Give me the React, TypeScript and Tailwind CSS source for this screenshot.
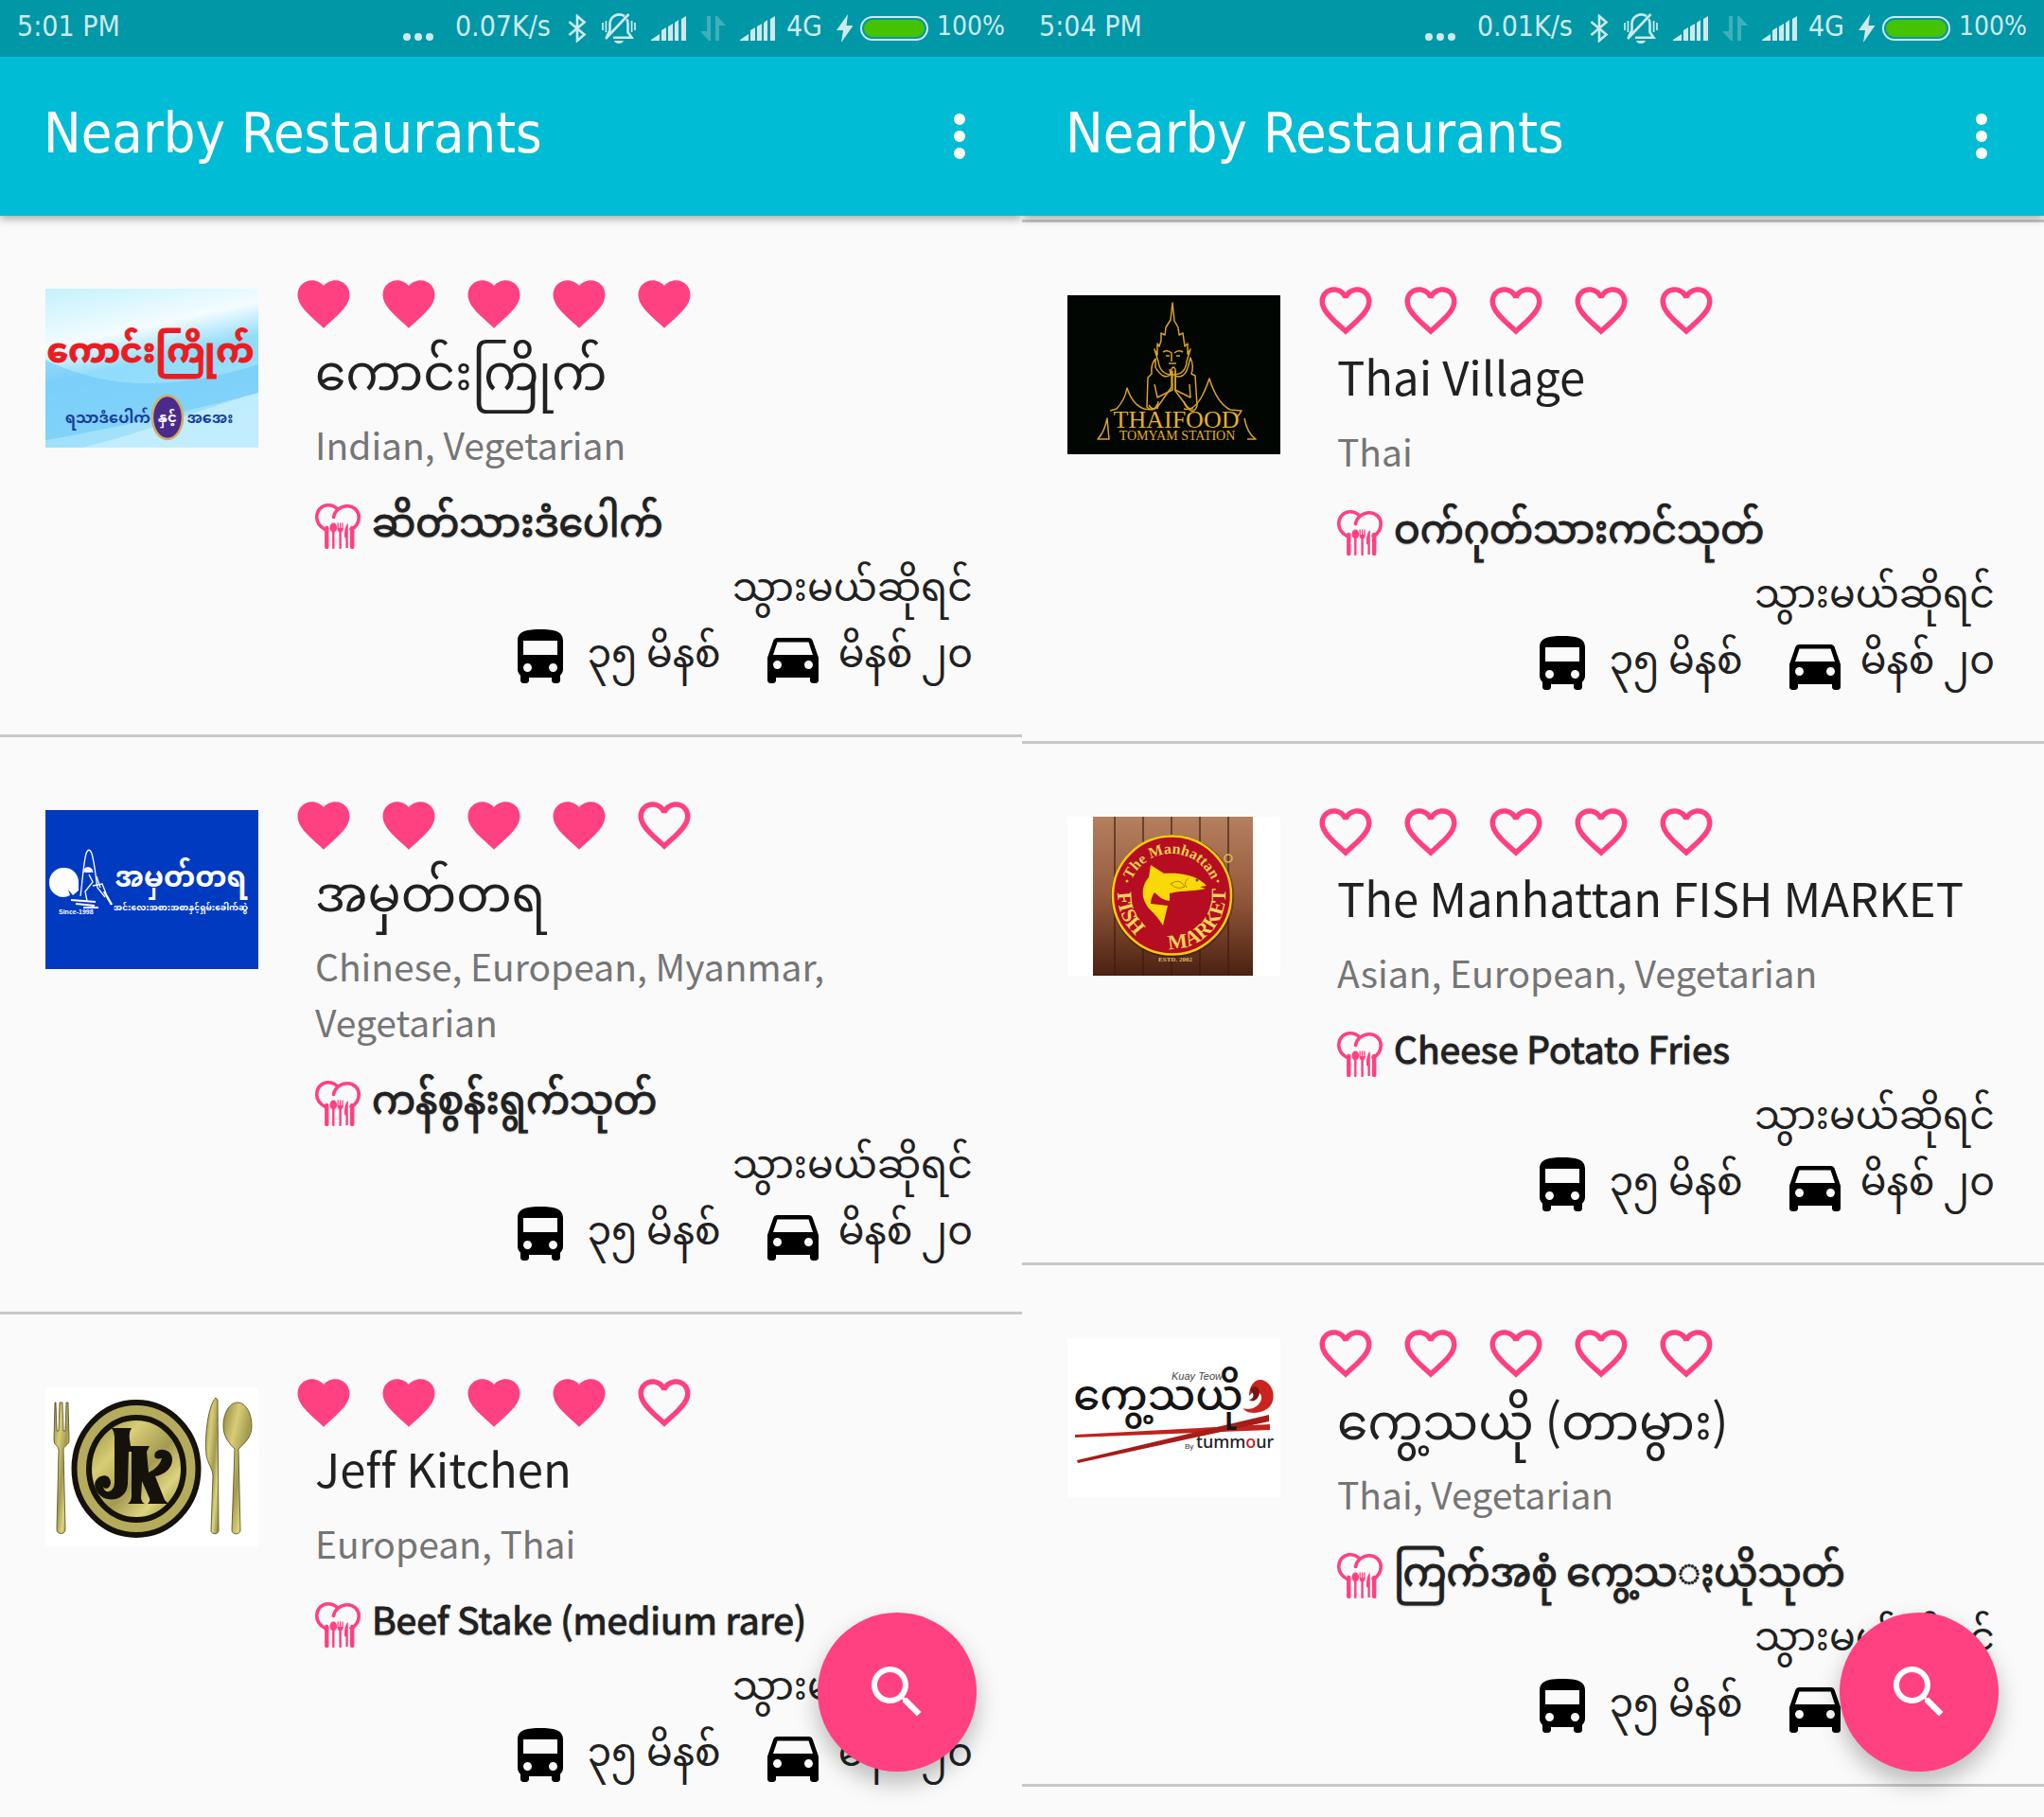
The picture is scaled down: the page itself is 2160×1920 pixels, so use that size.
import React from 'react';

const PINK = '#ff4081';

function Heart({ filled }: { filled: boolean }) {
  return (
    <svg viewBox="0 0 24 24" className="size-[66px]" fill={PINK} aria-hidden="true">
      {filled ? (
        <path d="M12 21.35l-1.45-1.32C5.4 15.36 2 12.28 2 8.5 2 5.42 4.42 3 7.5 3c1.74 0 3.41.81 4.5 2.09C13.09 3.81 14.76 3 16.5 3 19.58 3 22 5.42 22 8.5c0 3.78-3.4 6.86-8.55 11.54L12 21.35z" />
      ) : (
        <path d="M16.5 3c-1.74 0-3.41.81-4.5 2.09C10.91 3.81 9.24 3 7.5 3 4.42 3 2 5.42 2 8.5c0 3.78 3.4 6.86 8.55 11.54L12 21.35l1.45-1.32C18.6 15.36 22 12.28 22 8.5 22 5.42 19.58 3 16.5 3zm-4.4 15.55l-.1.1-.1-.1C7.14 14.24 4 11.39 4 8.5 4 6.5 5.5 5 7.5 5c1.54 0 3.04.99 3.57 2.36h1.87C13.46 5.99 14.96 5 16.5 5c2 0 3.5 1.5 3.5 3.5 0 2.89-3.14 5.74-7.9 10.05z" />
      )}
    </svg>
  );
}

function ChefHat() {
  return (
    <svg viewBox="0 0 48 48" className="mt-[11px] size-12 shrink-0" fill="none" stroke={PINK} aria-hidden="true">
      <path d="M10.500 27.500C4 24 1.600 19 1.800 14 2.200 6 8 1.800 13.500 1.800c4.500 0 8 1.700 10.700 4.600M19.500 14.500C20.500 8 27 2.800 34 2.800c7 0 12.200 5 12.200 11.600 0 5.600-3 10.600-8.200 13" strokeWidth="3.600" strokeLinecap="round" />
      <path d="M12.300 26v20M39.200 26v20" strokeWidth="4.400" strokeLinecap="round" />
      <path d="M19.300 30v17M26.600 30v17" strokeWidth="2.400" strokeLinecap="round" />
      <ellipse cx="19.300" cy="25.500" rx="3.800" ry="5" fill={PINK} stroke="none" />
      <path d="M24.200 21v6M26.600 21v6M29 21v6" strokeWidth="1.300" strokeLinecap="round" />
      <path d="M23.500 26h6.200c0 3-1.400 4.600-3.100 4.600s-3.100-1.600-3.100-4.600z" fill={PINK} stroke="none" />
      <path d="M34.800 21v26h-2.400V36.500c-1.600 0-1.600-2-1.400-5 .3-5 1.600-9 3.800-10.500z" fill={PINK} stroke="none" />
    </svg>
  );
}

function Bus() {
  return (
    <svg viewBox="0 0 24 24" className="size-[72px] shrink-0" aria-hidden="true">
      <path d="M4 16c0 .88.39 1.67 1 2.22V20c0 .55.45 1 1 1h1c.55 0 1-.45 1-1v-1h8v1c0 .55.45 1 1 1h1c.55 0 1-.45 1-1v-1.780c.61-.55 1-1.340 1-2.220V6c0-3.500-3.580-4-8-4s-8 .5-8 4v10zm3.500 1c-.83 0-1.500-.67-1.500-1.500S6.670 14 7.500 14s1.500.67 1.500 1.500S8.330 17 7.500 17zm9 0c-.83 0-1.500-.67-1.500-1.500s.67-1.500 1.500-1.500 1.500.67 1.500 1.500-.67 1.500-1.500 1.500zm1.500-6H6V6h12v5z" />
    </svg>
  );
}

function Car() {
  return (
    <svg viewBox="0 0 24 24" className="size-[72px] shrink-0" aria-hidden="true">
      <path d="M18.920 6.010C18.720 5.420 18.160 5 17.500 5h-11c-.66 0-1.210.42-1.420 1.010L3 12v8c0 .55.45 1 1 1h1c.55 0 1-.45 1-1v-1h12v1c0 .55.45 1 1 1h1c.55 0 1-.45 1-1v-8l-2.080-5.990zM6.500 16c-.83 0-1.500-.67-1.500-1.500S5.670 13 6.500 13s1.500.67 1.500 1.500S7.330 16 6.500 16zm11 0c-.83 0-1.500-.67-1.500-1.500s.67-1.500 1.500-1.500 1.500.67 1.500 1.500-.67 1.500-1.500 1.500zM5 11l1.500-4.500h11L19 11H5z" />
    </svg>
  );
}

function Signal() {
  return (
    <svg viewBox="0 0 37 26" className="h-[26px] w-[37px]" fill="currentColor" aria-hidden="true">
      <path d="M0 26v-1l9-6v7zM11 26V15l5-3v14zM18 26V11l5-3v18zM25 26V7l4-3v22zM32 26V3l5-3v26z" />
    </svg>
  );
}

function StatusBar({ time, rate }: { time: string; rate: string }) {
  return (
    <div className="flex h-[60px] items-center bg-[#0097a7] px-[18px] font-['DejaVu_Sans_Condensed','DejaVu_Sans',sans-serif] text-[30px] leading-none text-[#cceaed]">
      <span className="pb-1">{time}</span>
      <div className="ml-auto flex items-center">
        <svg viewBox="0 0 32 8" className="mt-[18px] h-2 w-8" fill="currentColor" aria-hidden="true">
          <circle cx="4" cy="4" r="4" />
          <circle cx="16" cy="4" r="4" />
          <circle cx="28" cy="4" r="4" />
        </svg>
        <span className="ml-[23px] pb-1">{rate}</span>
        <svg viewBox="0 0 20 30" className="ml-[18px] h-[30px] w-5" fill="none" stroke="currentColor" strokeWidth="2.600" aria-hidden="true">
          <path d="M1.500 8l16 13.500-7.500 6.500V2l7.500 6.500L1.500 22" />
        </svg>
        <svg viewBox="0 0 36 32" className="ml-4 h-8 w-9" fill="none" stroke="currentColor" strokeWidth="2.600" aria-hidden="true">
          <path d="M28.500 1L4 27M24 3C17-1 9 3 8.500 11v7L5 25M12 25.800h19.500L27.500 20v-9c0-2-.4-3.500-1.200-4.800" />
          <path d="M13 29h10c-.6 2-2.500 3-5 3s-4.400-1-5-3z" fill="currentColor" stroke="none" />
          <path d="M1 10v8M4.400 8v12M31.600 8v12M35 10v8" strokeWidth="1.700" />
        </svg>
        <span className="ml-4"><Signal /></span>
        <svg viewBox="0 0 27 26" className="ml-[15px] h-[26px] w-[27px] opacity-30" fill="currentColor" aria-hidden="true">
          <path d="M7 0h4v26H9L0 16h7zM16 0h2l9 10h-7v16h-4z" />
        </svg>
        <span className="ml-[15px]"><Signal /></span>
        <span className="ml-3 pb-1">4G</span>
        <svg viewBox="0 0 18 30" className="ml-[15px] h-[30px] w-[18px]" fill="currentColor" aria-hidden="true">
          <path d="M12 0L0 17h7L5 30 17.500 12h-7z" />
        </svg>
        <div className="ml-[7px] flex h-[26px] w-[72px] rounded-full border-2 border-current p-[2px]">
          <div className="flex-1 rounded-full bg-[#46c300]" />
        </div>
        <span className="ml-[9px] pb-1 text-[28px]">100%</span>
      </div>
    </div>
  );
}

function KaungLogo() {
  return (
    <svg viewBox="0 0 225 168" className="h-[168px] w-[225px]" role="img" aria-label="ကောင်းကြိုက်">
      <defs>
        <linearGradient id="sky" x1="0" y1="0" x2="0.300" y2="1">
          <stop offset="0" stopColor="#c4f1fd" />
          <stop offset="0.350" stopColor="#f4fcff" />
          <stop offset="0.550" stopColor="#8fdcfb" />
          <stop offset="1" stopColor="#a5e2fc" />
        </linearGradient>
      </defs>
      <rect width="225" height="168" fill="url(#sky)" />
      <path d="M0 75C60 105 130 110 225 80v30C150 130 60 150 0 160z" fill="#6cc8f8" opacity="0.600" />
      <path d="M40 168C110 150 170 125 225 110v58z" fill="#c8f0fe" opacity="0.800" />
      <text x="111" y="78" textAnchor="middle" fontSize="36" fontWeight="700" fill="#ea1c22" stroke="#ea1c22" strokeWidth="1">ကောင်းကြိုက်</text>
      <text x="66" y="142" textAnchor="middle" fontSize="16" fontWeight="700" fill="#1b3f9c">ရသာဒံပေါက်</text>
      <ellipse cx="129" cy="136" rx="16" ry="23" fill="#4b2a8c" stroke="#d3ae62" strokeWidth="2.500" />
      <text x="129" y="141" textAnchor="middle" fontSize="15" fontWeight="700" fill="#fff">နှင့်</text>
      <text x="174" y="142" textAnchor="middle" fontSize="16" fontWeight="700" fill="#1b3f9c">အအေး</text>
    </svg>
  );
}

function AmahtayaLogo() {
  return (
    <svg viewBox="0 0 225 168" className="h-[168px] w-[225px]" role="img" aria-label="အမှတ်တရ">
      <rect width="225" height="168" fill="#003ac0" />
      <path d="M19 61a15 15 0 0 1 16 15v9l-6 5-5-6 2 6a15 15 0 0 1-22-14 15 15 0 0 1 15-15z" fill="#fff" />
      <g fill="none" stroke="#fff" strokeWidth="1.300">
        <path d="M37 91c2-14 3-34 6-45 2-5 4-5 6 0 3 10 4 24 6 36l8 10" />
        <path d="M40 66c3-5 8-5 10 0M46 68l4 8-8 10 2 10M54 70l4 12M50 80l10-2 4 10" />
        <path d="M27 95l26 2M32 99l20 2M40 103h16" strokeWidth="2" />
        <path d="M62 86l8 14" strokeWidth="2.500" />
      </g>
      <path d="M40 63q5-6 10 0l-2 3h-6z" fill="#fff" />
      <text x="14" y="110" fontFamily="Liberation Sans" fontSize="7" fontWeight="700" fill="#fff">Since-1998</text>
      <text x="143" y="81" textAnchor="middle" fontSize="30" fontWeight="700" fill="#fff">အမှတ်တရ</text>
      <text x="143" y="106" textAnchor="middle" fontSize="9" fontWeight="700" fill="#fff">အင်းလေးအစားအစာနှင့်ရှမ်းခေါက်ဆွဲ</text>
    </svg>
  );
}

function JeffLogo() {
  return (
    <svg viewBox="0 0 225 168" className="h-[168px] w-[225px]" role="img" aria-label="Jeff Kitchen">
      <defs>
        <linearGradient id="gold" x1="0" y1="0" x2="1" y2="1">
          <stop offset="0" stopColor="#8c8440" />
          <stop offset="0.300" stopColor="#d8cd74" />
          <stop offset="0.550" stopColor="#a39a52" />
          <stop offset="0.750" stopColor="#ddd47e" />
          <stop offset="1" stopColor="#7f773a" />
        </linearGradient>
      </defs>
      <rect width="225" height="168" fill="#fff" />
      <g fill="url(#gold)" stroke="#4c4719" strokeWidth="0.800">
        <path d="M10 16l-1 40c0 5 5 6 5 10l-2 84c0 6 9 6 9 0l-2-84c0-4 6-5 6-10l-1-40h-2l-1 30h-2l-1-30h-3l-1 30h-2l-1-30z" />
        <path d="M180 11c-8 8-12 40-10 60 1 9 7 15 7 23l-2 57c0 5 8 5 8 0l-1-138z" />
        <path d="M203 16c-9 0-15 12-15 25 0 11 6 18 12 24l-3 86c0 5 9 5 9 0l-2-86c7-6 14-13 14-24 0-13-6-25-15-25z" />
      </g>
      <ellipse cx="96" cy="86" rx="65.500" ry="70" fill="#b5ab5c" stroke="#14120a" strokeWidth="6" />
      <ellipse cx="96" cy="86" rx="50" ry="54" fill="url(#gold)" stroke="#14120a" strokeWidth="6" />
      <path d="M70 43h21q-3 4-2 12l1 7h20l-3 6 2 22q12-6 14-15-10 2-7-6c4-6 18-4 18 7 0 12-12 17-18 18l10 25 4 4h-22q4-3 1-8l-7-16-1 18q1 5 4 6h-18q4-3 4-8V68h-3l-1 34c-1 20-28 22-34 5-5-12 14-20 16-7 0 6-5 9-8 5 2 9 12 6 12-5V52q0-5-3-9z" fill="#14120a" />
    </svg>
  );
}

function ThaiLogo() {
  return (
    <svg viewBox="0 0 225 168" className="h-[168px] w-[225px]" role="img" aria-label="Thai Food Tomyam Station">
      <rect width="225" height="168" fill="#020602" />
      <g fill="none" stroke="#d9a02c" strokeWidth="1.500" strokeLinejoin="round">
        <path d="M111 8l-2 18-5 8-1 8-4-2v8l-2 6-2-3v12l-3-6 4 13q2 14 15 14 14 0 15-14l4-13-3 5v-11l-3 3-1-7-1-7-4 2-1-8-4-7z" />
        <path d="M101 60q5-3 9 1v9M122 60q-5-3-9 1M104 64h4M115 64h4M107 72h8M108 78l1 6q-8 6-16-8v-9q-5 6-4 16l-4 4-1 31q6 6 12-1l14-20V78q2-4 4 0v23l15 20q5 4 8-4l-2-32-4-2q3-8-1-17l-3 11q-4 12-14 8" />
        <path d="M111 80v20l-16 8-3-14M114 80v20l16 8-1-14M86 116q5 8 9-1M96 112l-1 8M123 112q2 9 10 8" />
        <path d="M45 122l7-2q9-10 11-22 6 18 18 22 10 2 15-2M123 120q15 4 27-32 8 26 22 33l12 1-4 6" />
        <path d="M32 152h12q-1-10-2-22-3 15-10 22zM187 130q3 16 12 22h-9" />
      </g>
      <text x="115" y="140" textAnchor="middle" fontFamily="Liberation Serif" fontSize="26" fill="#e6ae2e">THAIFOOD</text>
      <text x="116" y="153" textAnchor="middle" fontFamily="Liberation Serif" fontSize="14" fill="#e0aa38">TOMYAM STATION</text>
    </svg>
  );
}

function FishLogo() {
  return (
    <svg viewBox="0 0 225 168" className="h-[168px] w-[225px]" role="img" aria-label="The Manhattan Fish Market">
      <defs>
        <linearGradient id="wood" x1="0" y1="0" x2="0" y2="1">
          <stop offset="0" stopColor="#b5805f" />
          <stop offset="0.500" stopColor="#94593b" />
          <stop offset="1" stopColor="#4b2112" />
        </linearGradient>
        <path id="arcTop" d="M64 85a46 46 0 0 1 92 0" />
        <path id="arcBottom" d="M54 72a57 57 0 1 0 112 0" />
      </defs>
      <rect width="225" height="168" fill="#fff" />
      <rect x="27" width="169" height="168" fill="url(#wood)" />
      <path d="M50 0v168M80 0v168M110 0v168M140 0v168M170 0v168" stroke="#3d1b10" strokeWidth="1.200" />
      <circle cx="111" cy="84" r="65" fill="#32120a" opacity="0.400" />
      <circle cx="110.500" cy="83" r="62.500" fill="#b60d22" stroke="#f7cf0a" strokeWidth="2.500" />
      <text fontFamily="Liberation Serif" fontSize="16" fontWeight="700" fill="#f0cf4a" textAnchor="middle">
        <textPath href="#arcTop" startOffset="50%">The Manhattan</textPath>
      </text>
      <text fontFamily="Liberation Serif" fontSize="22" fontWeight="700" fill="#f0d45a">
        <textPath href="#arcBottom" startOffset="4%">FISH</textPath>
      </text>
      <text fontFamily="Liberation Serif" fontSize="22" fontWeight="700" fill="#f0d45a" textAnchor="end">
        <textPath href="#arcBottom" startOffset="98%">MARKET</textPath>
      </text>
      <circle cx="63" cy="68" r="1.500" fill="#f0cf4a" />
      <circle cx="159" cy="68" r="1.500" fill="#f0cf4a" />
      <path d="M86 64l2-13 14 9c16-1 34 1 45 13l-7 1 6 2c-14 3-28 2-38 5v8q-4 0-9-3l-7-6q-4 6-4 12l18 2q-3 12-5 21-7-11-14-17c-12-14-7-27-1-34z" fill="#fbd808" />
      <path d="M109 71q10-7 15 3-8 4-15-3zM128 65q-6 4-2 10" fill="none" stroke="#a98c14" strokeWidth="1" />
      <circle cx="137" cy="67" r="1.500" fill="#5d4a08" />
      <circle cx="170" cy="44" r="4" fill="none" stroke="#e2c145" strokeWidth="1.500" />
      <text x="114" y="153" textAnchor="middle" fontFamily="Liberation Serif" fontSize="7" fontWeight="700" fill="#d8bd68">ESTD. 2002</text>
    </svg>
  );
}

function KuayLogo() {
  return (
    <svg viewBox="0 0 225 168" className="h-[168px] w-[225px]" role="img" aria-label="Kuay Teow by tummour">
      <rect width="225" height="168" fill="#fff" />
      <path d="M8 102l206-11v6L8 105z" fill="#c2221c" />
      <path d="M10 129L213 81v7L11 132z" fill="#a51d18" />
      <path d="M205 44c14 3 18 25 4 32-10 5-22 3-23-2 4 2 14 1 18-7 4-7-4-15-9-9l-3 3c0-11 6-18 13-17z" fill="#cb2420" />
      <path d="M193 55c2-6 9-5 10 2 0 7-7 12-11 8 4 0 6-5 3-8z" fill="#7c1512" />
      <text x="96" y="76" textAnchor="middle" fontSize="45" fontWeight="500" fill="#151515">ကွေ့သယို</text>
      <text x="110" y="44" fontFamily="Liberation Sans" fontSize="11" fontStyle="italic" fill="#444">Kuay Teow</text>
      <text x="124" y="117" fontFamily="Liberation Sans" fontSize="8" fill="#333">By</text>
      <text x="136" y="116" fontFamily="Noto Sans" fontSize="18" fontWeight="500" fill="#222">tumm<tspan fill="#c2221c">o</tspan>ur</text>
    </svg>
  );
}

type Restaurant = {
  name: string;
  rating: number;
  cuisines: string;
  dish: string;
  logo: React.ReactNode;
};

const hasBurmese = (text: string) => /[\u1000-\u109f]/.test(text);

function RestaurantRow({ name, rating, cuisines, dish, logo }: Restaurant) {
  return (
    <li className="flex border-b-[3px] border-[#c8c8c8] pb-[45px] pl-12 pr-[52px] pt-[60px]">
      <div className="mt-[17px] h-[168px] w-[225px] shrink-0">{logo}</div>
      <div className="ml-[60px] min-w-0 flex-1">
        <div className="-ml-6 flex gap-6" role="img" aria-label={`${rating} of 5 hearts`}>
          {[0, 1, 2, 3, 4].map((i) => (
            <Heart key={i} filled={i < rating} />
          ))}
        </div>
        <h2 className={hasBurmese(name) ? 'text-[52px]/[72px]' : 'text-[49px]/[72px] [font-variant-ligatures:none]'}>{name}</h2>
        <p className="mt-[14px] text-[39px]/[59px] text-[#757575]">{cuisines}</p>
        <div className="mt-[22px] flex h-[61px] gap-3">
          <ChefHat />
          <p
            className={
              hasBurmese(dish)
                ? 'whitespace-nowrap text-[41px]/[56px] [-webkit-text-stroke:1px_#212121] [text-shadow:0_1px_2px_rgba(0,0,0,0.4)]'
                : 'whitespace-nowrap text-[39px]/[56px] [-webkit-text-stroke:1px_#212121] [text-shadow:0_1px_2px_rgba(0,0,0,0.4)]'
            }
          >
            {dish}
          </p>
        </div>
        <p className="mt-[7px] text-right text-[41px]/[56px]">သွားမယ်ဆိုရင်</p>
        <div className="mt-[14px] flex justify-end gap-10 text-[41px]/[56px]">
          <div className="flex gap-[14px]">
            <Bus />
            <span>၃၅ မိနစ်</span>
          </div>
          <div className="flex gap-3">
            <Car />
            <span>မိနစ် ၂၀</span>
          </div>
        </div>
      </div>
    </li>
  );
}

type PhoneProps = { time: string; rate: string; scrolled?: boolean; items: Restaurant[] };

function Phone({ time, rate, scrolled, items }: PhoneProps) {
  return (
    <section className="relative flex h-screen flex-col overflow-hidden bg-[#fafafa] text-[#212121]">
      <header className="relative z-10 shrink-0 shadow-[0_3px_9px_rgba(0,0,0,0.35)]">
        <StatusBar time={time} rate={rate} />
        <div className="flex h-[168px] items-center justify-between bg-[#00bcd4] pl-[46px] pr-[30px] text-white">
          <h1 className="pb-2 font-['DejaVu_Sans_Condensed','DejaVu_Sans',sans-serif] text-[59px] leading-none">Nearby Restaurants</h1>
          <button type="button" aria-label="More options">
            <svg viewBox="0 0 24 24" className="size-[72px]" fill="currentColor" aria-hidden="true">
              <circle cx="12" cy="6" r="2" />
              <circle cx="12" cy="12" r="2" />
              <circle cx="12" cy="18" r="2" />
            </svg>
          </button>
        </div>
      </header>
      <ul className={scrolled ? 'mt-1 border-t-[3px] border-[#c8c8c8]' : ''}>
        {items.map((item) => (
          <RestaurantRow key={item.name} {...item} />
        ))}
      </ul>
      <button
        type="button"
        aria-label="Search"
        className="absolute bottom-12 right-12 z-10 flex size-[168px] items-center justify-center rounded-full bg-[#ff4081] text-white shadow-[0_12px_24px_rgba(0,0,0,0.26)]"
      >
        <svg viewBox="0 0 24 24" className="size-[72px]" fill="currentColor" aria-hidden="true">
          <path d="M15.500 14h-.79l-.28-.27C15.410 12.590 16 11.110 16 9.500 16 5.910 13.090 3 9.500 3S3 5.910 3 9.500 5.910 16 9.500 16c1.610 0 3.090-.59 4.230-1.570l.27.28v.79l5 4.990L20.490 19l-4.990-5zm-6 0C7.010 14 5 11.990 5 9.500S7.010 5 9.500 5 14 7.010 14 9.500 11.990 14 9.500 14z" />
        </svg>
      </button>
    </section>
  );
}

const left: Restaurant[] = [
  { name: 'ကောင်းကြိုက်', rating: 5, cuisines: 'Indian, Vegetarian', dish: 'ဆိတ်သားဒံပေါက်', logo: <KaungLogo /> },
  { name: 'အမှတ်တရ', rating: 4, cuisines: 'Chinese, European, Myanmar, Vegetarian', dish: 'ကန်စွန်းရွက်သုတ်', logo: <AmahtayaLogo /> },
  { name: 'Jeff Kitchen', rating: 4, cuisines: 'European, Thai', dish: 'Beef Stake (medium rare)', logo: <JeffLogo /> },
];

const right: Restaurant[] = [
  { name: 'Thai Village', rating: 0, cuisines: 'Thai', dish: 'ဝက်ဂုတ်သားကင်သုတ်', logo: <ThaiLogo /> },
  { name: 'The Manhattan FISH MARKET', rating: 0, cuisines: 'Asian, European, Vegetarian', dish: 'Cheese Potato Fries', logo: <FishLogo /> },
  { name: 'ကွေ့သယို (တာမွား)', rating: 0, cuisines: 'Thai, Vegetarian', dish: 'ကြက်အစုံ ကွေ့သ◌ႏယိုသုတ်', logo: <KuayLogo /> },
];

export default function App() {
  return (
    <main className="grid grid-cols-2 font-['Noto_Sans_CJK_SC','Noto_Sans_Myanmar','Noto_Sans',sans-serif]">
      <Phone time="5:01 PM" rate="0.07K/s" items={left} />
      <Phone time="5:04 PM" rate="0.01K/s" scrolled items={right} />
    </main>
  );
}
